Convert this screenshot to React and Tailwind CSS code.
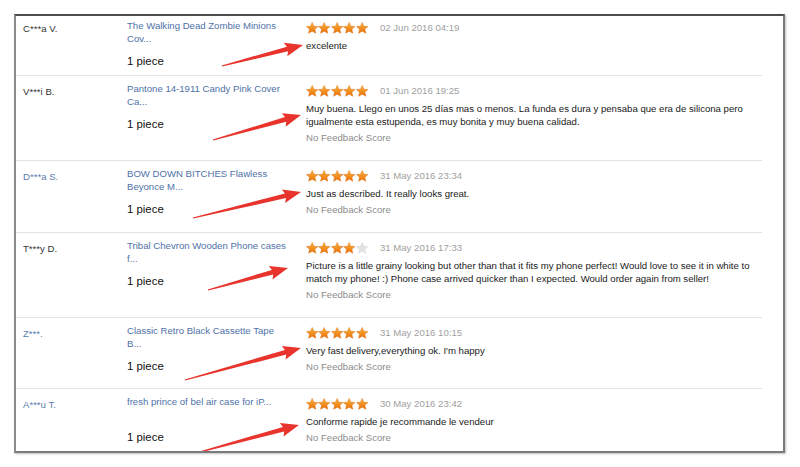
import React from 'react';

const reviews = [
    {
        name: 'C***a V.',
        nameBlue: false,
        product: ['The Walking Dead Zombie Minions', 'Cov...'],
        stars: 5,
        date: '02 Jun 2016 04:19',
        text: ['excelente'],
        feedback: false,
        height: 'h-[63px]'
    },
    {
        name: 'V***i B.',
        nameBlue: false,
        product: ['Pantone 14-1911 Candy Pink Cover', 'Ca...'],
        stars: 5,
        date: '01 Jun 2016 19:25',
        text: [
            'Muy buena. Llego en unos 25 días mas o menos. La funda es dura y pensaba que era de silicona pero',
            'igualmente esta estupenda, es muy bonita y muy buena calidad.'
        ],
        feedback: true,
        height: 'h-[85px]'
    },
    {
        name: 'D***a S.',
        nameBlue: true,
        product: ['BOW DOWN BITCHES Flawless', 'Beyonce M...'],
        stars: 5,
        date: '31 May 2016 23:34',
        text: ['Just as described. It really looks great.'],
        feedback: true,
        height: 'h-[72px]'
    },
    {
        name: 'T***y D.',
        nameBlue: false,
        product: ['Tribal Chevron Wooden Phone cases', 'f...'],
        stars: 4,
        date: '31 May 2016 17:33',
        text: [
            'Picture is a little grainy looking but other than that it fits my phone perfect! Would love to see it in white to',
            'match my phone! :) Phone case arrived quicker than I expected. Would order again from seller!'
        ],
        feedback: true,
        height: 'h-[85px]'
    },
    {
        name: 'Z***.',
        nameBlue: true,
        product: ['Classic Retro Black Cassette Tape', 'B...'],
        stars: 5,
        date: '31 May 2016 10:15',
        text: ["Very fast delivery,everything ok. I'm happy"],
        feedback: true,
        height: 'h-[71px]'
    },
    {
        name: 'A***u T.',
        nameBlue: true,
        product: ['fresh prince of bel air case for iP...'],
        stars: 5,
        date: '30 May 2016 23:42',
        text: ['Conforme rapide je recommande le vendeur'],
        feedback: true,
        height: 'h-[70px]'
    }
];

// arrow tail -> tip, in frame coordinates
const ARROWS = [
    [[206, 50], [287, 29]],
    [[197, 124], [285, 99]],
    [[177, 202], [285, 176]],
    [[192, 274], [272, 252]],
    [[169, 364], [285, 332]],
    [[184, 436], [283, 409]]
];

function arrowPoints([t, h]) {
    const dx = h[0] - t[0];
    const dy = h[1] - t[1];
    const len = Math.hypot(dx, dy);
    const ux = dx / len, uy = dy / len;
    const nx = -uy, ny = ux;
    const bx = h[0] - ux * 18, by = h[1] - uy * 18;
    const p = (x, y) => `${x.toFixed(1)},${y.toFixed(1)}`;
    return [
        p(t[0] + nx * 0.6, t[1] + ny * 0.6),
        p(bx + nx * 2.4 + ux * 2, by + ny * 2.4 + uy * 2),
        p(bx + nx * 7, by + ny * 7),
        p(h[0], h[1]),
        p(bx - nx * 7, by - ny * 7),
        p(bx - nx * 2.4 + ux * 2, by - ny * 2.4 + uy * 2),
        p(t[0] - nx * 0.6, t[1] - ny * 0.6)
    ].join(' ');
}

function Star({ filled }) {
    return (
        <svg width="12.4" height="12.4" viewBox="0 0 24 24">
            <defs>
                <linearGradient id="starFill" x1="0" y1="0" x2="0" y2="1">
                    <stop offset="0" stopColor="#fbb43a" />
                    <stop offset="1" stopColor="#e8700a" />
                </linearGradient>
            </defs>
            <path
                d="M12 0.8l3.3 7.3 7.9.7-6 5.3 1.8 7.8L12 17.9l-7 4 1.8-7.8-6-5.3 7.9-.7z"
                fill={filled ? 'url(#starFill)' : '#e2e2e2'}
                stroke={filled ? '#d9650a' : '#d6d6d6'}
                strokeWidth="0.8"
            />
        </svg>
    );
}

function ReviewRow({ review, last }) {
    return (
        <div className={`flex ${review.height} ${last ? '' : 'border-b border-[#e3e3e3] mr-[21px]'}`}>
            <div className={`w-[111px] shrink-0 pl-[7px] pt-[9px] leading-[13px] ${review.nameBlue ? 'text-[#5b7cad]' : 'text-[#333]'}`}>
                {review.name}
            </div>
            <div className="w-[179px] shrink-0 pt-[6px]">
                <div className="h-[33px] leading-[13px] text-[#4f72a8]">
                    {review.product.map((line) => (
                        <div key={line} className="whitespace-nowrap">{line}</div>
                    ))}
                </div>
                <div className="mt-[2px] text-[11.4px] leading-[14px] text-[#111]">1 piece</div>
            </div>
            <div className="pt-[9px]">
                <div className="flex items-center h-[12px]">
                    <div className="flex">
                        {[0, 1, 2, 3, 4].map((i) => (
                            <Star key={i} filled={i < review.stars} />
                        ))}
                    </div>
                    <span className="ml-[12px] text-[#a0a0a0] leading-[12px]">{review.date}</span>
                </div>
                <div className="mt-[5px] leading-[13px] text-[#1a1a1a]">
                    {review.text.map((line) => (
                        <div key={line} className="whitespace-nowrap">{line}</div>
                    ))}
                </div>
                {review.feedback && (
                    <div className="mt-[3px] leading-[13px] text-[#8c8c8c]">No Feedback Score</div>
                )}
            </div>
        </div>
    );
}

function App() {
    return (
        <div className="w-[800px] h-[467px] bg-white pt-[14px] pl-[14px] font-['Liberation_Sans',Arial,sans-serif] text-[9.6px]">
            <div className="relative w-[771px] h-[439px] border-2 border-[#7a7a7a] border-t-[#4e4e4e] border-l-[#8a8a8a] shadow-[1px_1px_2px_rgba(0,0,0,0.25)] overflow-hidden bg-white">
                <div className="-mt-[3px]">
                    {reviews.map((review, i) => (
                        <ReviewRow key={review.name} review={review} last={i === reviews.length - 1} />
                    ))}
                </div>
                <svg className="absolute inset-0 pointer-events-none" width="767" height="435">
                    {ARROWS.map((a, i) => (
                        <polygon key={i} points={arrowPoints(a)} fill="#e8342c" />
                    ))}
                </svg>
            </div>
        </div>
    );
}

export default App;
